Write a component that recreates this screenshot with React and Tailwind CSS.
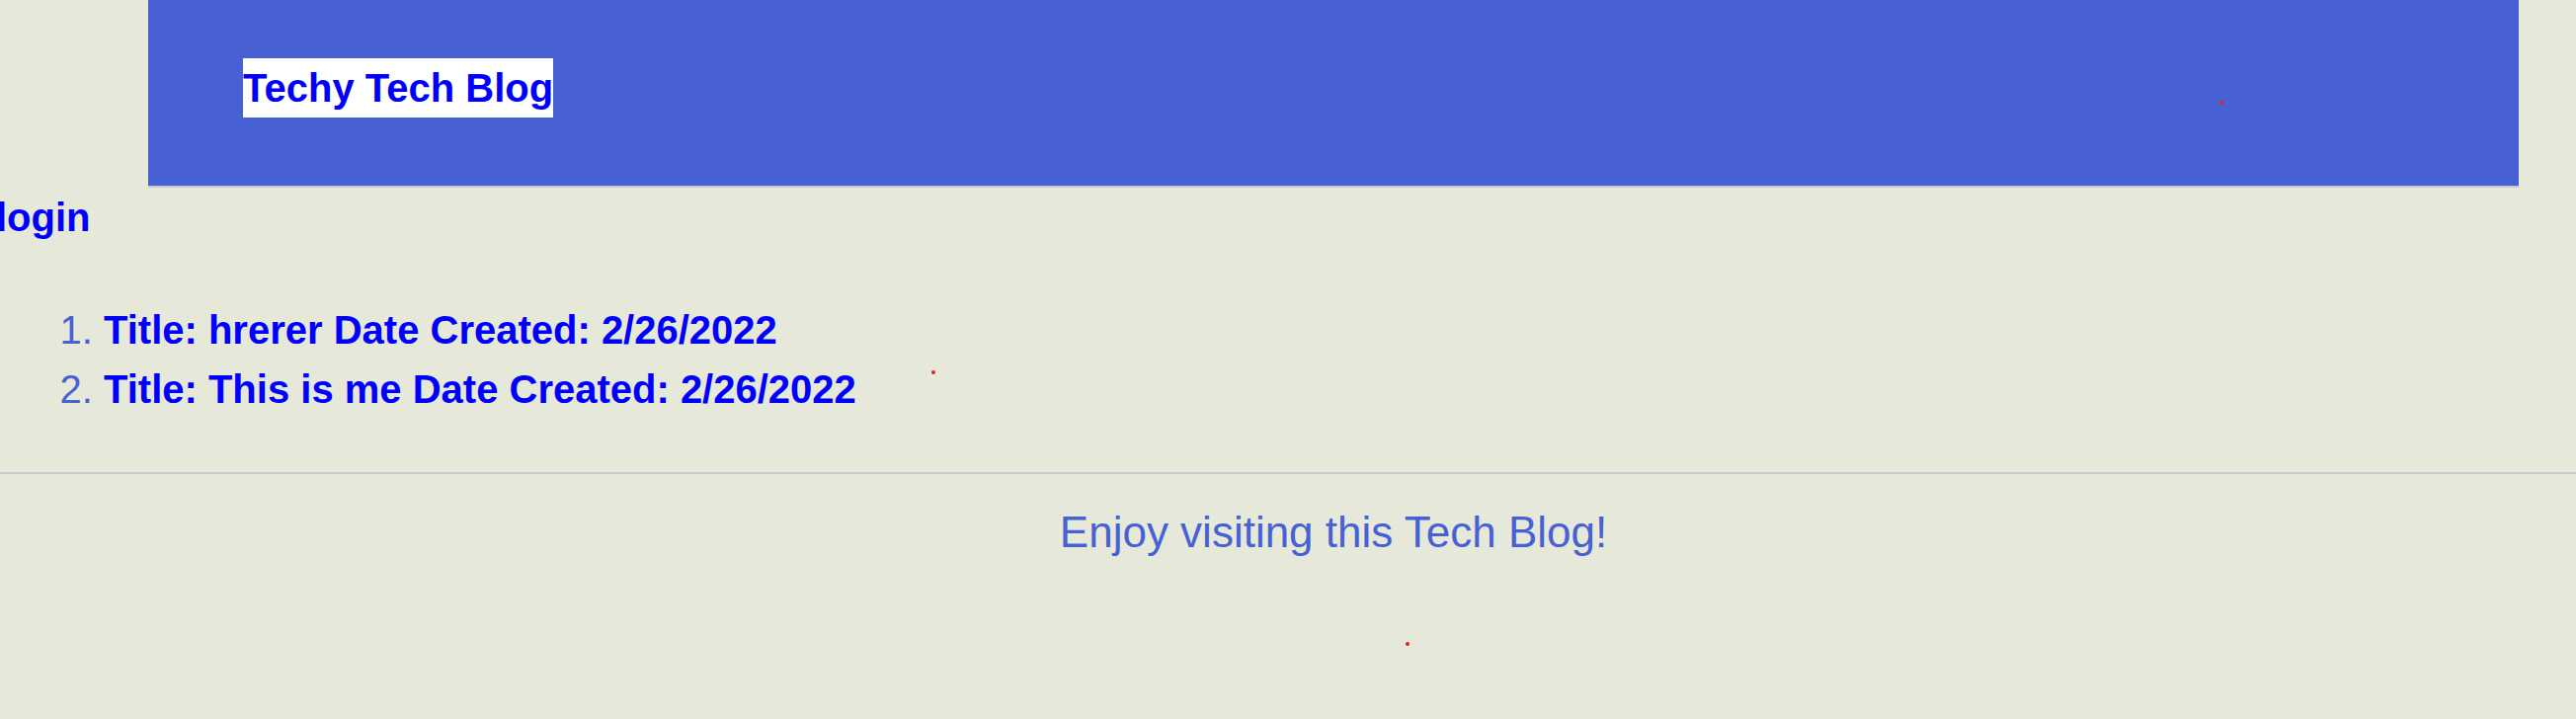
const posts = [
  { id: 1, title: "hrerer", date: "2/26/2022" },
  { id: 2, title: "This is me", date: "2/26/2022" },
];

function Dot({ className }) {
  return <span aria-hidden="true" className={`absolute size-1 rounded-full bg-[#ee1c1c] ${className}`} />;
}

export default function App() {
  return (
    <div className="relative min-h-screen overflow-hidden bg-[#e6e9d9] font-['Liberation_Sans',Arial,sans-serif] text-[40px] leading-[60px] text-[#4761d4]">
      <header className="mr-[58px] ml-[150px] flex border-b-2 border-[#ccc9cd] bg-[#4761d4] px-24 pt-[59px] pb-[69px]">
        <h1 className="font-bold">
          <a href="#home" className="block bg-white text-[#0000ff]">
            Techy Tech Blog
          </a>
        </h1>
      </header>

      <nav className="-ml-1">
        <a href="#login" className="font-bold text-[#0000ff]">
          login
        </a>
      </nav>

      <main className="pt-[54px] pb-[54px]">
        <ol className="list-decimal pl-[105px]">
          {posts.map((post) => (
            <li key={post.id}>
              <a href={`#post-${post.id}`} className="font-bold text-[#0000ff]">
                Title: {post.title} Date Created: {post.date}
              </a>
            </li>
          ))}
        </ol>
      </main>

      <footer className="border-t-2 border-[#ccc9cd] pt-[26px] pr-[58px] pl-[150px] text-center">
        <p className="text-[44px] leading-[66px]">Enjoy visiting this Tech Blog!</p>
      </footer>

      <Dot className="top-[375px] left-[943px]" />
      <Dot className="top-[650px] left-[1423px]" />
      <Dot className="top-[102px] left-[2247px]" />
    </div>
  );
}
